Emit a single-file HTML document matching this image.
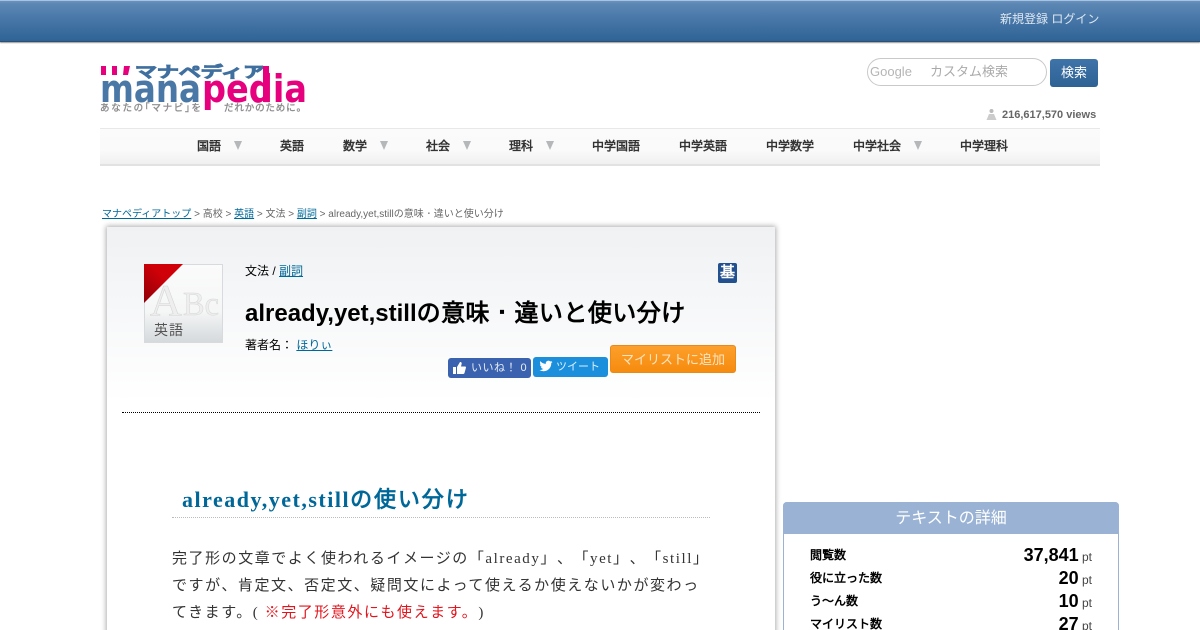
<!DOCTYPE html>
<html lang="ja"><head><meta charset="utf-8"><title>already,yet,stillの意味・違いと使い分け</title>
<style>
*{box-sizing:border-box}
html,body{margin:0;padding:0;width:1200px;height:630px;overflow:hidden;background:#fff}
body{position:relative;font-family:"Liberation Sans","WenQuanYi Zen Hei",sans-serif;color:#000;text-spacing-trim:space-all}
.a{position:absolute;white-space:nowrap}
a{color:#006899;text-decoration:underline}
.d{font-family:"IPAGothic",sans-serif}
#top{left:0;top:0;width:1200px;height:42px;background:linear-gradient(#6a92bc 0,#5c87b4 3px,#4d7bab 14px,#2f6396 40px);border-top:1px solid #a5c3e2;border-bottom:1px solid #2c4f73;box-shadow:0 1px 1px #999}
#nav{left:100px;top:128px;width:1000px;height:38px;background:linear-gradient(#fbfbfb,#fafafa 60%,#f0f0f0);border-top:1px solid #e8e8e8;border-bottom:2px solid #e2e2e2}
.n{top:138px;font-size:12px;font-weight:bold;color:#333;line-height:16px}
.t{top:141px;width:0;height:0;border-left:4.5px solid transparent;border-right:4.5px solid transparent;border-top:9px solid #b4b8bb}
#card{left:107px;top:227px;width:668px;height:420px;background:linear-gradient(#eff1f3,#fff 175px);box-shadow:0 0 5px 1px rgba(0,0,0,.32)}
</style></head><body>
<div class="a" id="top"></div>
<div class="a" style="left:1000px;top:11px;font-size:12px;line-height:16px;color:#dfe8f1">新規登録 ログイン</div>

<svg class="a" style="left:100px;top:60px" width="210" height="56" viewBox="0 0 210 56">
<rect x="1" y="6" width="5" height="9" fill="#e6007e"/><rect x="12" y="6" width="5" height="9" fill="#e6007e"/><path d="M24 6h6l-2 9h-5z" fill="#e6007e"/>
<text x="35" y="17" font-size="15" font-weight="bold" fill="#3f6f9f" stroke="#3f6f9f" stroke-width=".9" textLength="130" lengthAdjust="spacingAndGlyphs" font-family="Liberation Sans,WenQuanYi Zen Hei,sans-serif">マナペディア</text>
<text x="0" y="42" font-size="38" font-weight="bold" fill="#4a78a6" textLength="101" lengthAdjust="spacingAndGlyphs" font-family="DejaVu Sans,sans-serif">mana</text>
<text x="102" y="42" font-size="38" font-weight="bold" fill="#e6007e" textLength="105" lengthAdjust="spacingAndGlyphs" font-family="DejaVu Sans,sans-serif">pedia</text>
<rect x="163" y="6" width="6" height="36" fill="#e6007e"/>
<text x="0" y="51" font-size="9.5" font-weight="bold" fill="#8f8f8f" textLength="101" lengthAdjust="spacing" font-family="Liberation Sans,WenQuanYi Zen Hei,sans-serif">あなたの｢マナビ｣を</text>
<text x="124" y="51" font-size="9.5" font-weight="bold" fill="#8f8f8f" textLength="82" lengthAdjust="spacing" font-family="Liberation Sans,WenQuanYi Zen Hei,sans-serif">だれかのために。</text>
</svg>

<div class="a" style="left:867px;top:58px;width:180px;height:28px;border:1px solid #c9c9c9;border-radius:14px;background:#fff"></div>
<div class="a" style="left:870px;top:64px;font-size:13px;line-height:16px;color:#b5b5b5">Google</div>
<div class="a" style="left:930px;top:63px;font-size:13px;line-height:18px;color:#aaa">カスタム検索</div>
<div class="a" style="left:1050px;top:59px;width:48px;height:28px;border-radius:3px;background:linear-gradient(#3f74a9,#2e6295);color:#fff;font-size:13px;line-height:27px;text-align:center">検索</div>
<svg class="a" style="left:985px;top:108px" width="13" height="13" viewBox="0 0 13 13"><circle cx="6.5" cy="3" r="2" fill="#bbb"/><path d="M4 6h5l2.500 6h-10z" fill="#ccc"/></svg>
<div class="a" style="left:1002px;top:108px;font-size:11px;line-height:14px;font-weight:bold;color:#666">216,617,570 views</div>

<div class="a" id="nav"></div>
<div class="a n" style="left:197px">国語</div><div class="a t" style="left:234px"></div>
<div class="a n" style="left:280px">英語</div>
<div class="a n" style="left:343px">数学</div><div class="a t" style="left:380px"></div>
<div class="a n" style="left:426px">社会</div><div class="a t" style="left:463px"></div>
<div class="a n" style="left:509px">理科</div><div class="a t" style="left:546px"></div>
<div class="a n" style="left:592px">中学国語</div>
<div class="a n" style="left:679px">中学英語</div>
<div class="a n" style="left:766px">中学数学</div>
<div class="a n" style="left:853px">中学社会</div><div class="a t" style="left:914px"></div>
<div class="a n" style="left:960px">中学理科</div>

<div class="a" style="left:102px;top:207px;font-size:10px;line-height:14px;color:#666"><a href="#">マナペディアトップ</a> &gt; 高校 &gt; <a href="#">英語</a> &gt; 文法 &gt; <a href="#">副詞</a> &gt; already,yet,stillの意味<span class="d">・</span>違いと使い分け</div>

<div class="a" id="card"></div>
<svg class="a" style="left:144px;top:264px" width="79" height="79" viewBox="0 0 79 79">
<defs><linearGradient id="g" x1="0" y1="0" x2="0" y2="1"><stop offset="0" stop-color="#fbfbfb"/><stop offset=".6" stop-color="#f5f6f6"/><stop offset="1" stop-color="#d5d9dc"/></linearGradient>
<linearGradient id="r" x1="0" y1="1" x2="1" y2="0"><stop offset="0" stop-color="#8f0008"/><stop offset=".6" stop-color="#d00008"/></linearGradient></defs>
<rect x=".5" y=".5" width="78" height="78" fill="url(#g)" stroke="#d8dbdd"/>
<text x="6" y="51" font-size="44" fill="#eeeeee" stroke="#d6d6d6" stroke-width=".6" font-family="Liberation Serif,serif">A</text>
<text x="39" y="51" font-size="34" fill="#eeeeee" stroke="#d6d6d6" stroke-width=".5" font-family="Liberation Serif,serif" textLength="36" lengthAdjust="spacingAndGlyphs">Bc</text>
<path d="M0 0H39L0 39Z" fill="url(#r)"/>
<text x="10" y="71" font-size="14" fill="#555" letter-spacing="1" font-family="Liberation Sans,WenQuanYi Zen Hei,sans-serif">英語</text>
</svg>

<div class="a" style="left:245px;top:263px;font-size:12px;line-height:16px">文法 / <a href="#">副詞</a></div>
<div class="a" style="left:718px;top:263px;width:19px;height:20px;background:#23508f;border-radius:2px;color:#fff;font-size:15px;font-weight:bold;line-height:20px;text-align:center">基</div>
<div class="a" style="left:245px;top:295px;font-size:24px;line-height:34px;font-weight:bold">already,yet,still<span style="letter-spacing:.45px">の意味<span class="d">・</span>違いと使い分け</span></div>
<div class="a" style="left:245px;top:337px;font-size:12px;line-height:16px">著者名： <a href="#">ほりぃ</a></div>

<div class="a" style="left:448px;top:358px;width:83px;height:20px;background:#3b62ae;border-radius:3px;color:#e8eef8;font-size:11px;line-height:21px;padding-left:23px;letter-spacing:.5px">いいね！ 0</div>
<svg class="a" style="left:452px;top:361px" width="15" height="14" viewBox="0 0 15 14"><path d="M1 6h3v7H1zM5 6l3-5c1.500 0 2 1 1.500 2.500L9 5.500h4c1 0 1.200 1 .8 1.800L12.500 12c-.3.700-.8 1-1.500 1H5z" fill="#fff"/></svg>
<div class="a" style="left:533px;top:357px;width:75px;height:20px;background:#1b8fdc;border-radius:3px;color:#dcefff;font-size:11px;line-height:21px;padding-left:23px">ツイート</div>
<svg class="a" style="left:539px;top:360px" width="14" height="13" viewBox="0 0 24 22"><path d="M23 3c-.8.400-1.700.600-2.600.800.900-.600 1.700-1.500 2-2.500-.9.500-1.900.900-2.900 1.100A4.600 4.600 0 0 0 11.700 6.500C7.900 6.300 4.500 4.500 2.200 1.700c-1.200 2.100-.6 4.800 1.400 6.100-.7 0-1.400-.2-2-.6 0 2.200 1.500 4.100 3.700 4.600-.7.200-1.400.2-2.100.1.600 1.900 2.300 3.200 4.300 3.200A9.300 9.300 0 0 1 .7 17a13 13 0 0 0 7.100 2.100c8.600 0 13.500-7.300 13.200-13.800.9-.6 1.700-1.400 2-2.300z" fill="#fff"/></svg>
<div class="a" style="left:610px;top:345px;width:126px;height:28px;background:linear-gradient(#fca02c,#f68b0e);border:1px solid #e8891a;border-radius:3px;color:#fde4c2;font-size:13px;line-height:27px;text-align:center">マイリストに追加</div>

<div class="a" style="left:122px;top:412px;width:638px;border-top:1px dotted #000"></div>

<div class="a" style="left:182px;top:485px;font-family:'Liberation Serif','WenQuanYi Zen Hei',serif;font-size:22px;line-height:30px;font-weight:bold;color:#006899;letter-spacing:1.5px">already,yet,still<span style="letter-spacing:1.9px">の使い分け</span></div>
<div class="a" style="left:172px;top:517px;width:538px;border-top:1px dotted #bbb"></div>

<div class="a" style="left:172px;top:546px;font-family:'Liberation Serif','WenQuanYi Zen Hei',serif;font-size:15px;line-height:27px;color:#333;letter-spacing:1.55px">完了形の文章でよく使われるイメージの「already」、「yet」、「still」<br>ですが、肯定文、否定文、疑問文によって使えるか使えないかが変わっ<br>てきます。( <span style="color:#e2141c">※完了形意外にも使えます。</span>)</div>

<div class="a" style="left:783px;top:502px;width:336px;height:140px;border:1px solid #9ab3d5;border-radius:4px;background:#fff"></div>
<div class="a" style="left:783px;top:502px;width:336px;height:32px;background:#9ab3d5;border-radius:4px 4px 0 0;color:#fff;font-size:16px;line-height:33px;text-align:center">テキストの詳細</div>
<div class="a" style="left:810px;top:546px;font-size:12px;line-height:18px;font-weight:bold">閲覧数</div>
<div class="a" style="left:810px;top:569px;font-size:12px;line-height:18px;font-weight:bold">役に立った数</div>
<div class="a" style="left:810px;top:592px;font-size:12px;line-height:18px;font-weight:bold">う〜ん数</div>
<div class="a" style="left:810px;top:615px;font-size:12px;line-height:18px;font-weight:bold">マイリスト数</div>
<div class="a" style="right:108px;top:543px;font-size:12px;line-height:24px;color:#444"><b style="font-size:18px;color:#000">37,841</b> pt</div>
<div class="a" style="right:108px;top:566px;font-size:12px;line-height:24px;color:#444"><b style="font-size:18px;color:#000">20</b> pt</div>
<div class="a" style="right:108px;top:589px;font-size:12px;line-height:24px;color:#444"><b style="font-size:18px;color:#000">10</b> pt</div>
<div class="a" style="right:108px;top:612px;font-size:12px;line-height:24px;color:#444"><b style="font-size:18px;color:#000">27</b> pt</div>
</body></html>
